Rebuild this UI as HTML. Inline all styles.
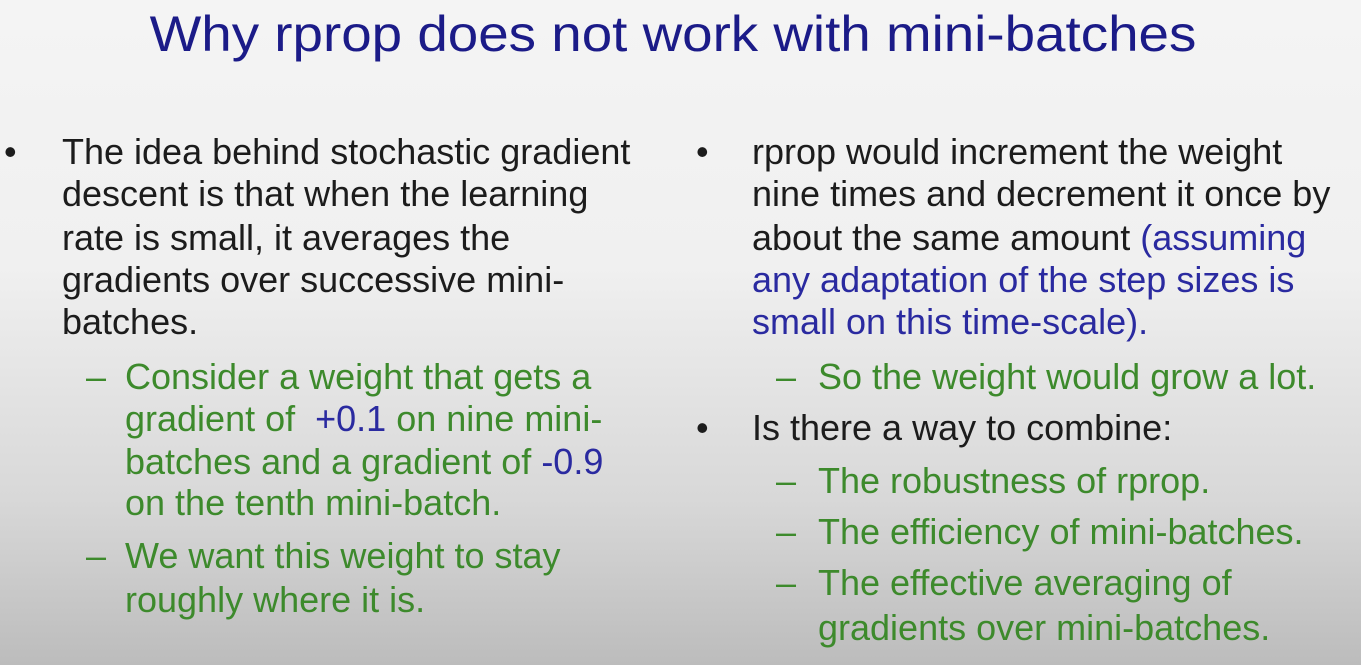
<!DOCTYPE html>
<html><head><meta charset="utf-8"><style>
html,body{margin:0;padding:0}
body{width:1361px;height:665px;overflow:hidden;position:relative;
background:linear-gradient(to bottom,#f4f4f4 0%,#f0f0f0 40%,#d8d8d8 75%,#bcbcbc 100%);
font-family:"Liberation Sans",sans-serif;}
.t{position:absolute;white-space:nowrap;font-size:36px;line-height:40px;color:#1c1c1c}
.g{color:#3d8a2c}.b{color:#2a2aa0}
.title{position:absolute;left:-8px;width:1361px;top:6px;text-align:center;font-size:50px;line-height:56px;color:#1b1b88;white-space:nowrap}
.title span{display:inline-block;transform:scaleX(1.095)}
</style></head><body>
<div class="title"><span>Why rprop does not work with mini-batches</span></div>

<div class="t" style="left:4px;top:132px">•</div>
<div class="t" style="left:62px;top:132px">The idea behind stochastic gradient</div>
<div class="t" style="left:62px;top:174px">descent is that when the learning</div>
<div class="t" style="left:62px;top:218px">rate is small, it averages the</div>
<div class="t" style="left:62px;top:260px">gradients over successive mini-</div>
<div class="t" style="left:62px;top:302px">batches.</div>

<div class="t g" style="left:86px;top:357px">–</div>
<div class="t g" style="left:125px;top:357px">Consider a weight that gets a</div>
<div class="t g" style="left:125px;top:399px">gradient of &nbsp;<span class="b">+0.1</span> on nine mini-</div>
<div class="t g" style="left:125px;top:442px">batches and a gradient of <span class="b">-0.9</span></div>
<div class="t g" style="left:125px;top:483px">on the tenth mini-batch.</div>
<div class="t g" style="left:86px;top:536px">–</div>
<div class="t g" style="left:125px;top:536px">We want this weight to stay</div>
<div class="t g" style="left:125px;top:580px">roughly where it is.</div>

<div class="t" style="left:696px;top:132px">•</div>
<div class="t" style="left:752px;top:132px">rprop would increment the weight</div>
<div class="t" style="left:752px;top:174px">nine times and decrement it once by</div>
<div class="t" style="left:752px;top:218px">about the same amount <span class="b">(assuming</span></div>
<div class="t b" style="left:752px;top:260px">any adaptation of the step sizes is</div>
<div class="t b" style="left:752px;top:302px">small on this time-scale).</div>
<div class="t g" style="left:776px;top:357px">–</div>
<div class="t g" style="left:818px;top:357px">So the weight would grow a lot.</div>
<div class="t" style="left:696px;top:408px">•</div>
<div class="t" style="left:752px;top:408px">Is there a way to combine:</div>
<div class="t g" style="left:776px;top:461px">–</div>
<div class="t g" style="left:818px;top:461px">The robustness of rprop.</div>
<div class="t g" style="left:776px;top:512px">–</div>
<div class="t g" style="left:818px;top:512px">The efficiency of mini-batches.</div>
<div class="t g" style="left:776px;top:563px">–</div>
<div class="t g" style="left:818px;top:563px">The effective averaging of</div>
<div class="t g" style="left:818px;top:608px">gradients over mini-batches.</div>
</body></html>
